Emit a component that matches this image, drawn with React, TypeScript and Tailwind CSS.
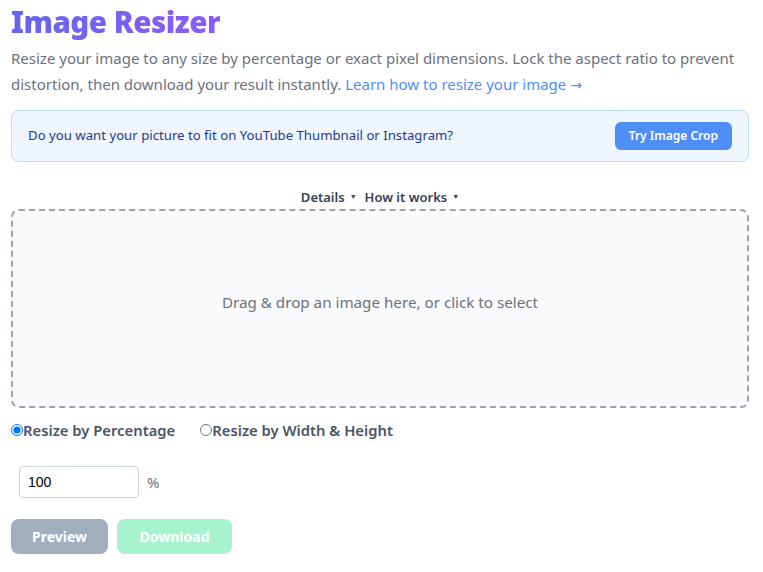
import { useState } from "react";

export default function App() {
  const [mode, setMode] = useState<"percent" | "size">("percent");
  const [percent, setPercent] = useState<string>("100");

  return (
    <div className="min-h-screen bg-white pl-[11px] pr-[14px] font-['Noto_Sans',sans-serif] text-gray-600">
      <h1 className="text-[29.5px] font-black tracking-[-0.5px] leading-[44px] bg-gradient-to-r from-[#6366f1] to-[#8b5cf6] bg-clip-text text-transparent w-fit">
        Image Resizer
      </h1>
      <p className="mt-[1px] text-[15px] leading-[26px] text-[#6b7280]">
        <span>
          Resize your image to any size by percentage or exact pixel dimensions.
          Lock the aspect ratio to prevent
        </span>
        <br />
        <span>distortion, then download your result instantly. </span>
        <a href="#" className="text-[#4f8ef7]">
          Learn how to resize your image{" "}
          <span className="font-['DejaVu_Sans',sans-serif] text-[14px] leading-[0]">
            →
          </span>
        </a>
      </p>

      {/* Crop suggestion */}
      <div className="mt-[13px] flex items-center justify-between h-[52px] rounded-lg border border-[#bfdbfe] bg-[#eff6ff] px-[16px]">
        <span className="text-[13.2px] text-[#1e3a8a]">
          Do you want your picture to fit on YouTube Thumbnail or Instagram?
        </span>
        <button
          type="button"
          className="h-[28px] px-[14px] rounded-md bg-[#4f8ef7] text-white text-[12px] font-semibold"
        >
          Try Image Crop
        </button>
      </div>

      <div className="mt-[26px] flex justify-center items-center gap-[8px] text-[13px] font-semibold text-gray-700 leading-[18px]">
        <button type="button" className="flex items-center gap-[5px]">
          Details <span className="text-[7px]">▼</span>
        </button>
        <button type="button" className="flex items-center gap-[5px]">
          How it works <span className="text-[7px]">▼</span>
        </button>
      </div>

      {/* Dropzone */}
      <div className="mt-[3px] h-[199px] pb-[12px] flex items-center justify-center rounded-lg border-2 border-dashed border-[#9ca3af] bg-[#f9fafb] cursor-pointer">
        <span className="text-[15.2px] text-[#6b7280]">
          Drag &amp; drop an image here, or click to select
        </span>
      </div>

      <div className="mt-[12px] h-[20px] flex items-center gap-[25px] text-[14.8px] font-semibold text-[#4b5563]">
        <label className="flex items-center">
          <input
            type="radio"
            name="mode"
            className="m-0 w-[12px] h-[12px] accent-[#0075ff]"
            checked={mode === "percent"}
            onChange={() => setMode("percent")}
          />
          Resize by Percentage
        </label>
        <label className="flex items-center">
          <input
            type="radio"
            name="mode"
            className="m-0 w-[12px] h-[12px]"
            checked={mode === "size"}
            onChange={() => setMode("size")}
          />
          Resize by Width &amp; Height
        </label>
      </div>

      <div className="mt-[26px] ml-[8px] flex items-center gap-[8px]">
        <input
          value={percent}
          onChange={(e) => setPercent(e.target.value)}
          className="w-[120px] h-[32px] rounded border border-[#cbd5e1] px-[8px] text-[14px] text-black outline-none font-['Liberation_Sans',sans-serif]"
        />
        <span className="text-[15px] text-[#6b7280]">%</span>
      </div>

      <div className="mt-[21px] flex items-center gap-[9px]">
        <button
          type="button"
          className="h-[35px] w-[97px] rounded-lg bg-[#a0aec0] text-white text-[14px] font-bold"
        >
          Preview
        </button>
        <button
          type="button"
          disabled
          className="h-[35px] w-[115px] rounded-lg bg-[#a7f3d0] text-white text-[14px] font-bold"
        >
          Download
        </button>
      </div>
    </div>
  );
}
